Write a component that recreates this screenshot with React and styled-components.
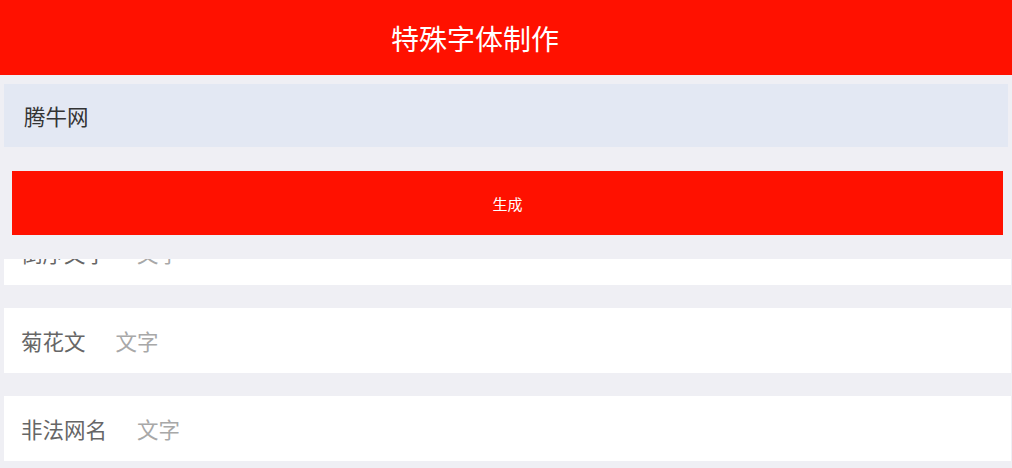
import React from "react";
import styled, { createGlobalStyle } from "styled-components";

const GlobalStyle = createGlobalStyle`
  html, body {
    margin: 0;
    padding: 0;
    background: #efeff4;
    font-family: "Noto Sans CJK SC", "Noto Sans", sans-serif;
  }
`;

const items = [
  { name: "倒序文字", hint: "文字" },
  { name: "菊花文", hint: "文字" },
  { name: "非法网名", hint: "文字" },
];

// top part stays on screen while the list scrolls under it
const TopPanel = styled.div`
  position: fixed;
  top: 0;
  left: 0;
  right: 0;
  height: 259px;
  background: #efeff4;
  z-index: 10;
`;

const Header = styled.header`
  height: 75px;
  background: #ff1100;
  color: #ffffff;
  font-size: 28px;
  display: flex;
  align-items: center;
  justify-content: center;
  padding-right: 62px;
`;

const InputBox = styled.div`
  margin: 9px 4px 0 4px;
  height: 63px;
  background: #e3e8f3;
  display: flex;
  align-items: center;
  padding-left: 20px;
  font-size: 21.5px;
  color: #333333;
`;

const MakeButton = styled.button`
  display: block;
  margin: 24px 9px 0 12px;
  width: calc(100% - 21px);
  height: 64px;
  border: none;
  background: #ff1100;
  color: #ffffff;
  font-family: inherit;
  font-size: 15px;
  cursor: pointer;
`;

const List = styled.div`
  padding-top: 220px;
  display: flex;
  flex-direction: column;
  gap: 23px;
`;

const Row = styled.div`
  margin: 0 1px 0 4px;
  height: 65px;
  background: #ffffff;
  display: flex;
  align-items: center;
  padding-left: 17px;
  font-size: 21.5px;
`;

const Label = styled.span`
  color: #666666;
`;

const Hint = styled.span`
  color: #a8a8a8;
  margin-left: 30px;
`;

export default function App() {
  return (
    <>
      <GlobalStyle />
      <TopPanel>
        <Header>特殊字体制作</Header>
        <InputBox>腾牛网</InputBox>
        <MakeButton>生成</MakeButton>
      </TopPanel>
      <List>
        {items.map((item) => (
          <Row key={item.name}>
            <Label>{item.name}</Label>
            <Hint>{item.hint}</Hint>
          </Row>
        ))}
      </List>
    </>
  );
}
